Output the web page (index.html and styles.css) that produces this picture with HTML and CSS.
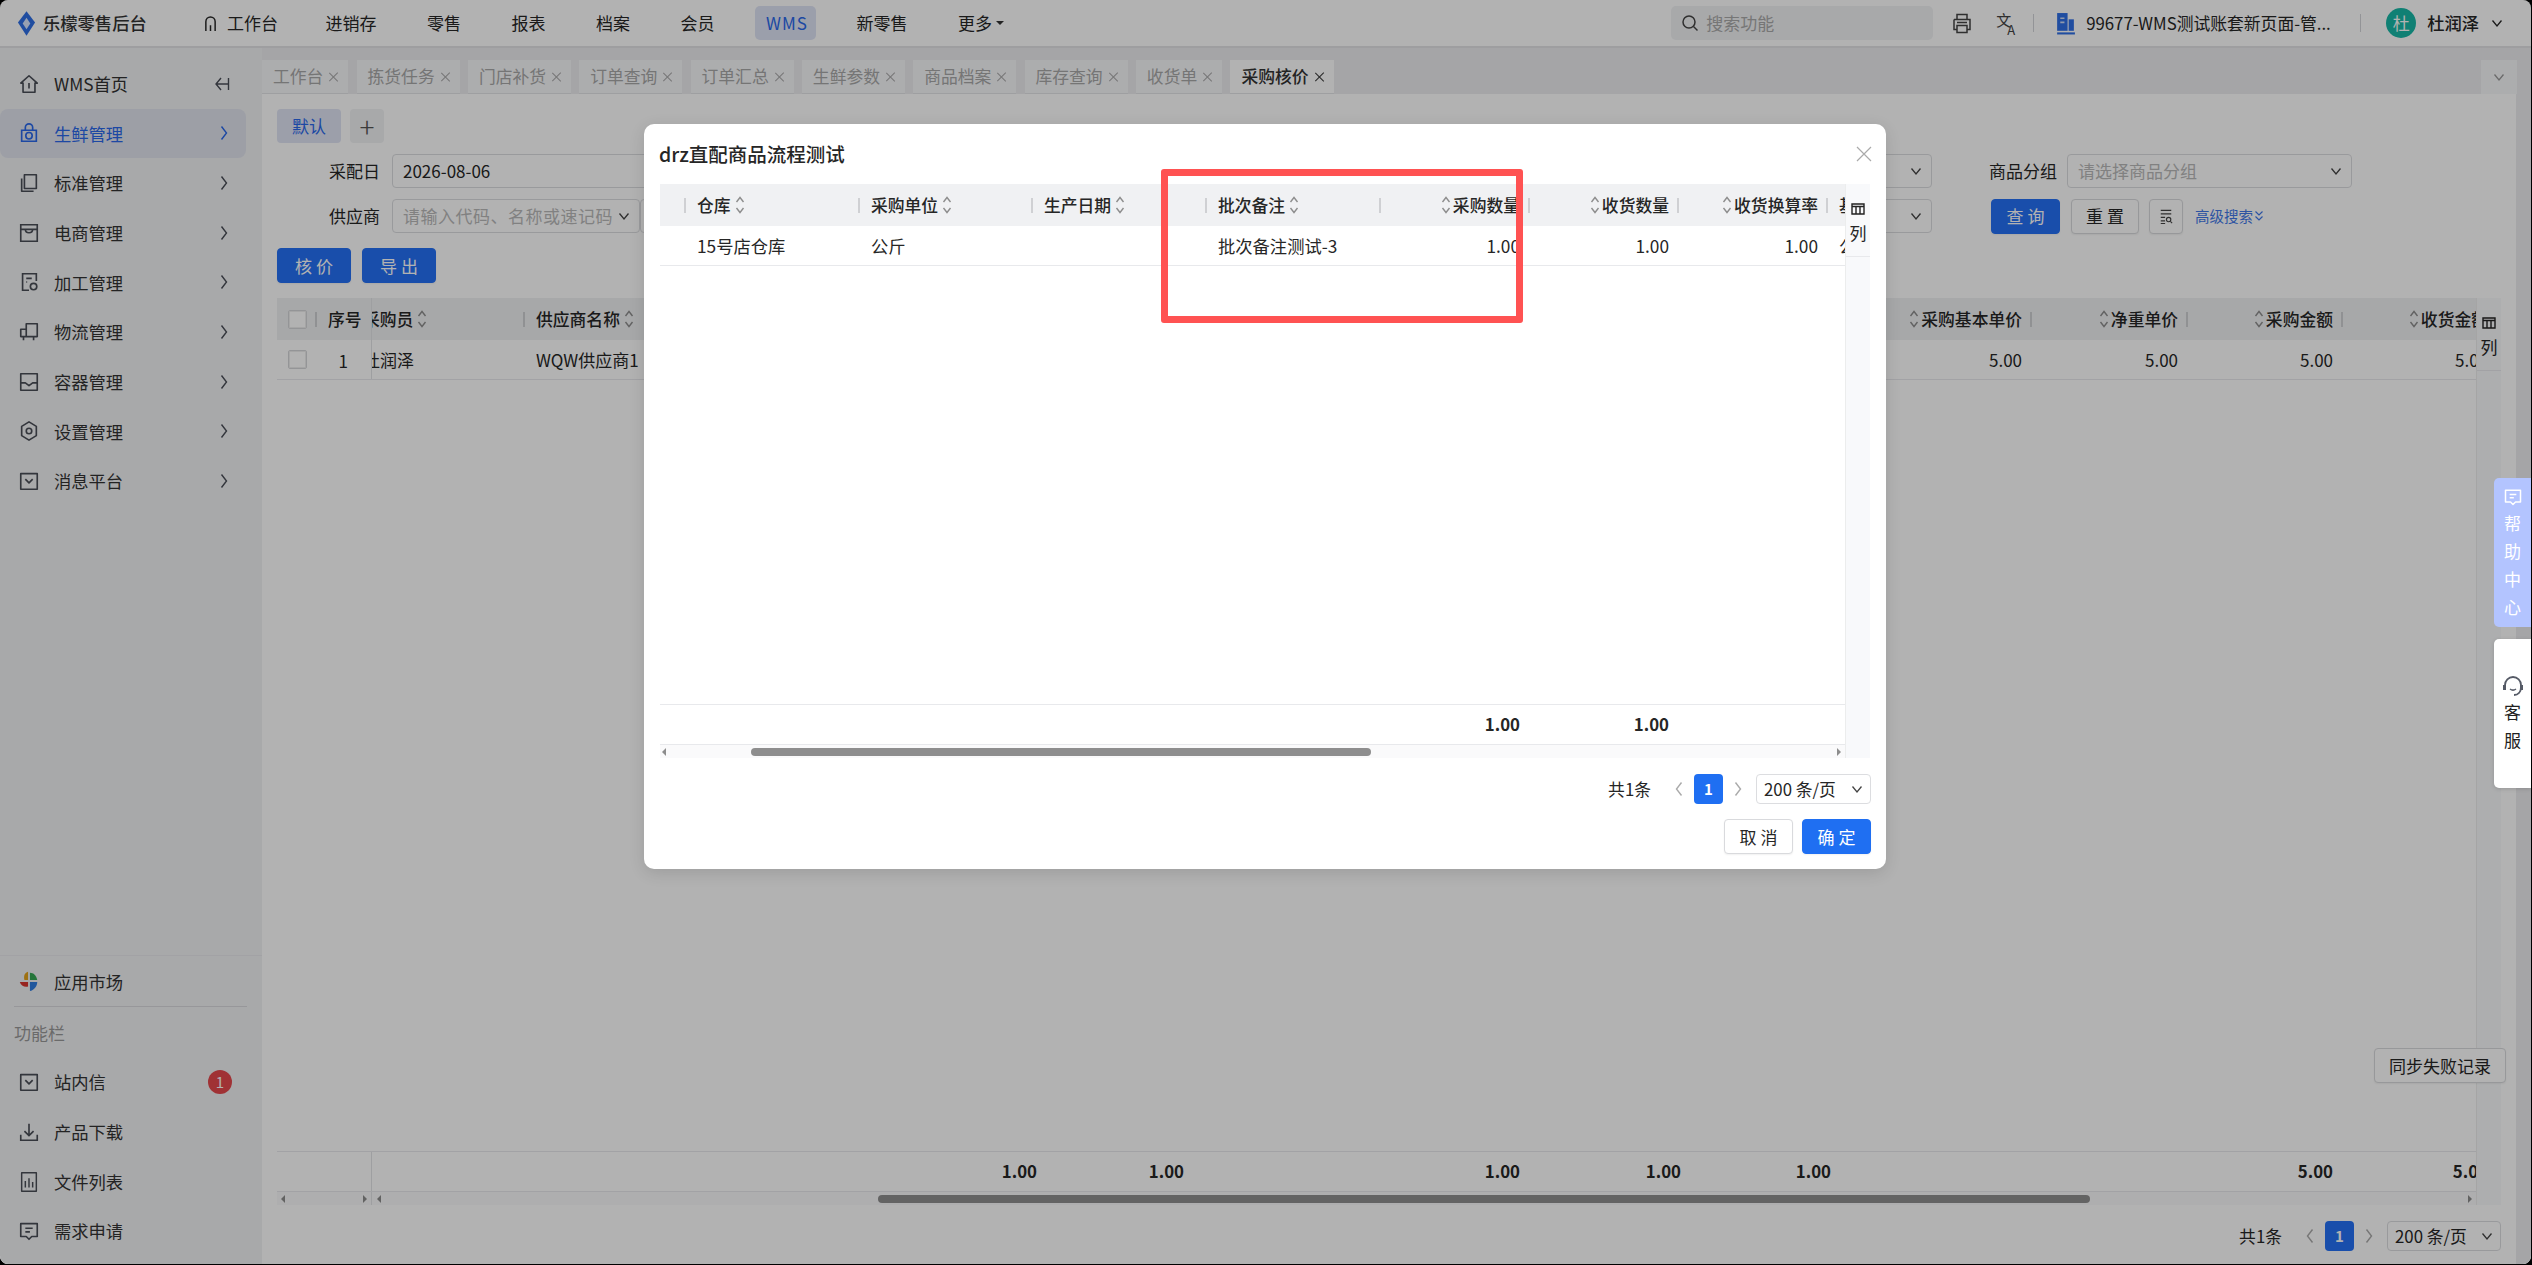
FILE: index.html
```html
<!DOCTYPE html>
<html lang="zh-CN">
<head>
<meta charset="utf-8">
<title>采购核价</title>
<link rel="stylesheet" href="styles.css">
</head>
<body>
<svg class="sprite" aria-hidden="true">
  <symbol id="sort" viewBox="0 0 10 20"><path d="M1.5 7 5 2.500l3.500 4.500M1.5 13 5 17.500l3.500-4.500" fill="none" stroke="currentColor" stroke-width="1.400"/></symbol>
  <symbol id="down" viewBox="0 0 12 12"><path d="M1.5 3.5 6 9l4.500-5.500" fill="none" stroke="currentColor" stroke-width="1.300"/></symbol>
  <symbol id="right" viewBox="0 0 10 20"><path d="M2.500 3.500 7.500 10l-5 6.500" fill="none" stroke="currentColor" stroke-width="1.400"/></symbol>
  <symbol id="left" viewBox="0 0 10 20"><path d="M7.500 3.500 2.500 10l5 6.500" fill="none" stroke="currentColor" stroke-width="1.400"/></symbol>
  <symbol id="dbl" viewBox="0 0 10 12"><path d="M1.500 1.500 5 5l3.500-3.500M1.500 6.500 5 10l3.500-3.500" fill="none" stroke="currentColor" stroke-width="1.200"/></symbol>
  <symbol id="cols" viewBox="0 0 14 14"><path d="M1 2h12v10H1zM1 4.500h12M5 4.500V12M9 4.500V12" fill="none" stroke="currentColor" stroke-width="1.400"/></symbol>
  <symbol id="chat" viewBox="0 0 24 24"><path d="M3 4h18v14h-6l-3 3-3-3H3zM8 9h8M8 13h5" fill="none" stroke="currentColor" stroke-width="1.800" stroke-linejoin="round"/></symbol>
  <symbol id="tray" viewBox="0 0 24 24"><path d="M3 4h18v17H3zM8 10l4 4 4-4" fill="none" stroke="currentColor" stroke-width="1.800" stroke-linejoin="round"/></symbol>
</svg>
<div class="app">
  <header class="topbar">
    <div class="brand">
      <svg class="brand-mark" viewBox="0 0 20 26"><path d="M10 0 19 12 10 26 1 12z" fill="#2f6fe6"/><path d="M10 7 14 13 10 19 6 13z" fill="#d8e6ff"/></svg>
      <span class="brand-name">乐檬零售后台</span>
    </div>
    <nav class="topnav">
      <a class="nav-item nav-first"><svg class="nav-home" viewBox="0 0 14 18"><path d="M2 17V7a5 5 0 0 1 10 0v10M7 11v6" fill="none" stroke="currentColor" stroke-width="1.600"/></svg>工作台</a>
      <a class="nav-item">进销存</a>
      <a class="nav-item">零售</a>
      <a class="nav-item">报表</a>
      <a class="nav-item">档案</a>
      <a class="nav-item">会员</a>
      <a class="nav-item nav-on">WMS</a>
      <a class="nav-item">新零售</a>
      <a class="nav-item">更多<span class="caret"></span></a>
    </nav>
    <div class="top-right">
      <div class="search">
        <svg class="search-ico" viewBox="0 0 18 18"><circle cx="8" cy="8" r="6" fill="none" stroke="currentColor" stroke-width="1.500"/><path d="m12.500 12.500 4 4" stroke="currentColor" stroke-width="1.500"/></svg>
        <span>搜索功能</span>
      </div>
      <svg class="print-ico" viewBox="0 0 20 22"><path d="M5 7V2h10v5M2 7h16v10h-3M5 17H2V7M5 13h10v7H5zM5 10h10" fill="none" stroke="currentColor" stroke-width="1.500"/></svg>
      <span class="lang"><span class="lang-cn">文</span><span class="lang-en">A</span></span>
      <span class="vline vline-a"></span>
      <svg class="book-ico" viewBox="0 0 18 22"><path d="M1 1h10v17H1z" fill="#2f6fe6"/><path d="M12 7h5v11h-5z" fill="#2f6fe6"/><path d="M1 20.500h17" stroke="#2f6fe6" stroke-width="2"/><path d="M4 6h4M4 10h4" stroke="#cfdcf5" stroke-width="1.600"/></svg>
      <span class="company">99677-WMS测试账套新页面-管...</span>
      <span class="vline vline-b"></span>
      <span class="avatar">杜</span>
      <span class="user">杜润泽</span>
      <svg class="user-caret"><use href="#down"/></svg>
    </div>
  </header>

  <div class="shell">
    <aside class="side">
      <div class="side-top">
        <a class="side-item"><svg class="ico" viewBox="0 0 24 24"><path d="M3 11 12 3l9 8h-2.500v10h-13V11zM12 11v6" fill="none" stroke="currentColor" stroke-width="1.800" stroke-linejoin="round"/></svg><span class="side-label">WMS首页</span><svg class="collapse" viewBox="0 0 18 18"><path d="M8 3 3 9l5 6M3 9h13M15.500 3v12" fill="none" stroke="currentColor" stroke-width="1.400"/></svg></a>
        <a class="side-item side-on"><svg class="ico" viewBox="0 0 24 24"><path d="M4 9h16v12H4zM8 9V6a4 4 0 0 1 8 0v3" fill="none" stroke="currentColor" stroke-width="1.800"/><circle cx="12" cy="15" r="3.500" fill="none" stroke="currentColor" stroke-width="1.800"/></svg><span class="side-label">生鲜管理</span><svg class="arr"><use href="#right"/></svg></a>
        <a class="side-item"><svg class="ico" viewBox="0 0 24 24"><path d="M7 3h13v15H7zM4 7v14h13" fill="none" stroke="currentColor" stroke-width="1.800" stroke-linejoin="round"/></svg><span class="side-label">标准管理</span><svg class="arr"><use href="#right"/></svg></a>
        <a class="side-item"><svg class="ico" viewBox="0 0 24 24"><path d="M3 3h18v18H3zM3 8h18M8 8c0 5 8 5 8 0" fill="none" stroke="currentColor" stroke-width="1.800"/></svg><span class="side-label">电商管理</span><svg class="arr"><use href="#right"/></svg></a>
        <a class="side-item"><svg class="ico" viewBox="0 0 24 24"><path d="M20 11V3H5v18h7M9 8h6M9 12h1" fill="none" stroke="currentColor" stroke-width="1.800"/><circle cx="17" cy="17" r="3.500" fill="none" stroke="currentColor" stroke-width="1.800"/></svg><span class="side-label">加工管理</span><svg class="arr"><use href="#right"/></svg></a>
        <a class="side-item"><svg class="ico" viewBox="0 0 24 24"><path d="M9 3h12v14H3V9h6zM9 3v14M6 17v4M17 17v4" fill="none" stroke="currentColor" stroke-width="1.800" stroke-linejoin="round"/></svg><span class="side-label">物流管理</span><svg class="arr"><use href="#right"/></svg></a>
        <a class="side-item"><svg class="ico" viewBox="0 0 24 24"><path d="M3 3h18v18H3zM3 13h5l4 3 4-3h5" fill="none" stroke="currentColor" stroke-width="1.800" stroke-linejoin="round"/></svg><span class="side-label">容器管理</span><svg class="arr"><use href="#right"/></svg></a>
        <a class="side-item"><svg class="ico" viewBox="0 0 24 24"><path d="M12 2 20 7v10l-8 5-8-5V7z" fill="none" stroke="currentColor" stroke-width="1.800" stroke-linejoin="round"/><circle cx="12" cy="12" r="3" fill="none" stroke="currentColor" stroke-width="1.800"/></svg><span class="side-label">设置管理</span><svg class="arr"><use href="#right"/></svg></a>
        <a class="side-item"><svg class="ico"><use href="#tray"/></svg><span class="side-label">消息平台</span><svg class="arr"><use href="#right"/></svg></a>
      </div>
      <div class="side-bottom">
        <a class="side-item side-market"><svg class="ico" viewBox="0 0 24 24"><path d="M11 2C7 3 6 7 7 11h4z" fill="#e2a21b"/><path d="M13 3c4 0 7 3 8 8h-8z" fill="#35a853"/><path d="M11 13H2c1 4 5 6 9 5z" fill="#d8362f"/><path d="M13 13h8c0 5-4 9-8 10z" fill="#2f7de1"/></svg><span class="side-label">应用市场</span></a>
        <div class="side-title">功能栏</div>
        <a class="side-item"><svg class="ico"><use href="#tray"/></svg><span class="side-label">站内信</span><span class="badge">1</span></a>
        <a class="side-item"><svg class="ico" viewBox="0 0 24 24"><path d="M12 3v13M7 11l5 5 5-5M3 15v6h18v-6" fill="none" stroke="currentColor" stroke-width="1.800"/></svg><span class="side-label">产品下载</span></a>
        <a class="side-item"><svg class="ico" viewBox="0 0 24 24"><path d="M4 2h16v20H4zM8 11v7M12 8v10M16 12v6" fill="none" stroke="currentColor" stroke-width="1.600" stroke-linejoin="round"/></svg><span class="side-label">文件列表</span></a>
        <a class="side-item"><svg class="ico"><use href="#chat"/></svg><span class="side-label">需求申请</span></a>
      </div>
    </aside>

    <div class="work">
      <div class="tabs">
        <span class="tab">工作台<i class="x"></i></span>
        <span class="tab">拣货任务<i class="x"></i></span>
        <span class="tab">门店补货<i class="x"></i></span>
        <span class="tab">订单查询<i class="x"></i></span>
        <span class="tab">订单汇总<i class="x"></i></span>
        <span class="tab">生鲜参数<i class="x"></i></span>
        <span class="tab">商品档案<i class="x"></i></span>
        <span class="tab">库存查询<i class="x"></i></span>
        <span class="tab">收货单<i class="x"></i></span>
        <span class="tab tab-on">采购核价<i class="x"></i></span>
        <span class="tab-more"><svg class="tab-more-ico"><use href="#down"/></svg></span>
      </div>
      <div class="work-row">
        <main class="page">
          <div class="presets"><span class="preset preset-on">默认</span><span class="preset preset-add">+</span></div>
          <div class="form-row">
            <label class="f-label">采配日</label>
            <div class="field field-wide">2026-08-06<svg class="f-arrow"><use href="#down"/></svg></div>
            <label class="f-label f-label-b">商品分组</label>
            <div class="field field-group"><span class="ph">请选择商品分组</span><svg class="f-arrow"><use href="#down"/></svg></div>
          </div>
          <div class="form-row">
            <label class="f-label">供应商</label>
            <div class="field field-supplier"><span class="ph ph-long">请输入代码、名称或速记码</span><svg class="f-arrow"><use href="#down"/></svg></div>
            <div class="field field-rest"><svg class="f-arrow"><use href="#down"/></svg></div>
            <div class="form-acts">
              <button class="btn btn-query">查 询</button>
              <button class="btn btn-reset">重 置</button>
              <button class="btn btn-icon"><svg class="list-ico" viewBox="0 0 16 18"><path d="M2 2h12M2 6h12M2 10h5M2 14h5M2 17h5" stroke="currentColor" stroke-width="1.300" fill="none"/><circle cx="11" cy="12.500" r="2.500" fill="none" stroke="currentColor" stroke-width="1.300"/><path d="m13 14.500 2 2" stroke="currentColor" stroke-width="1.300"/></svg></button>
              <a class="adv">高级搜索<svg class="adv-mark"><use href="#dbl"/></svg></a>
            </div>
          </div>
          <div class="acts"><button class="btn btn-primary">核 价</button><button class="btn btn-primary">导 出</button></div>

          <section class="dt">
            <div class="dt-main">
              <div class="dt-scroll">
                <div class="dt-grid dt-head">
                  <div class="c c-check"><span class="check"></span></div>
                  <div class="c c-seq">序号</div>
                  <div class="c c-sep"><span class="clip">采购员</span><svg class="sort"><use href="#sort"/></svg></div>
                  <div class="c c-sep">供应商名称<svg class="sort"><use href="#sort"/></svg></div>
                  <div class="c c-sep">商品名称</div>
                  <div class="c c-sep c-r"><svg class="sort"><use href="#sort"/></svg>采购数量</div>
                  <div class="c c-sep c-r"><svg class="sort"><use href="#sort"/></svg>收货数量</div>
                  <div class="c c-sep">单位</div>
                  <div class="c c-sep c-r"><svg class="sort"><use href="#sort"/></svg>收货换算率</div>
                  <div class="c c-sep c-r"><svg class="sort"><use href="#sort"/></svg>基本数量</div>
                  <div class="c c-sep c-r"><svg class="sort"><use href="#sort"/></svg>净重数量</div>
                  <div class="c c-sep c-r"><svg class="sort"><use href="#sort"/></svg>采购基本单价</div>
                  <div class="c c-sep c-r"><svg class="sort"><use href="#sort"/></svg>净重单价</div>
                  <div class="c c-sep c-r"><svg class="sort"><use href="#sort"/></svg>采购金额</div>
                  <div class="c c-r"><svg class="sort"><use href="#sort"/></svg>收货金额</div>
                </div>
                <div class="dt-grid dt-row">
                  <div class="c c-check"><span class="check"></span></div>
                  <div class="c c-seq c-num">1</div>
                  <div class="c"><span class="clip">杜润泽</span></div>
                  <div class="c">WQW供应商1</div>
                  <div class="c"></div>
                  <div class="c c-r">1.00</div>
                  <div class="c c-r">1.00</div>
                  <div class="c">公斤</div>
                  <div class="c c-r">1.00</div>
                  <div class="c c-r">1.00</div>
                  <div class="c c-r">1.00</div>
                  <div class="c c-r">5.00</div>
                  <div class="c c-r">5.00</div>
                  <div class="c c-r">5.00</div>
                  <div class="c c-r">5.00</div>
                </div>
                <div class="dt-body"></div>
                <div class="dt-grid dt-sum">
                  <div class="c"></div><div class="c c-seq"></div><div class="c"></div><div class="c"></div><div class="c"></div>
                  <div class="c c-r">1.00</div><div class="c c-r">1.00</div><div class="c"></div>
                  <div class="c c-r">1.00</div><div class="c c-r">1.00</div><div class="c c-r">1.00</div>
                  <div class="c"></div><div class="c"></div>
                  <div class="c c-r">5.00</div><div class="c c-r">5.00</div>
                </div>
                <div class="hbar">
                  <div class="hbar-fixed"><i class="tri-l"></i><i class="tri-r"></i></div>
                  <div class="hbar-track"><i class="tri-l"></i><span class="thumb thumb-main"></span><i class="tri-r tri-end"></i></div>
                </div>
              </div>
              <div class="colstrip">
                <div class="colstrip-cell"><svg class="cols-ico"><use href="#cols"/></svg><span>列</span></div>
              </div>
            </div>
            <button class="btn sync">同步失败记录</button>
          </section>

          <div class="pager pager-main">
            <span class="p-total">共1条</span>
            <svg class="p-nav"><use href="#left"/></svg><span class="p-cur">1</span><svg class="p-nav"><use href="#right"/></svg>
            <span class="p-size">200 条/页<svg class="p-arrow"><use href="#down"/></svg></span>
          </div>
        </main>
        <div class="page-gutter"></div>
      </div>
    </div>
  </div>

  <div class="mask"></div>

  <div class="modal">
    <div class="m-head"><span class="m-title">drz直配商品流程测试</span><svg class="m-close" viewBox="0 0 16 16"><path d="m1 1 14 14M15 1 1 15" stroke="currentColor" stroke-width="1.200"/></svg></div>
    <div class="mt">
      <div class="mt-scroll">
        <div class="mt-grid mt-head">
          <div class="c c-sep"></div>
          <div class="c c-sep">仓库<svg class="sort"><use href="#sort"/></svg></div>
          <div class="c c-sep">采购单位<svg class="sort"><use href="#sort"/></svg></div>
          <div class="c c-sep">生产日期<svg class="sort"><use href="#sort"/></svg></div>
          <div class="c c-sep">批次备注<svg class="sort"><use href="#sort"/></svg></div>
          <div class="c c-sep c-r"><svg class="sort"><use href="#sort"/></svg>采购数量</div>
          <div class="c c-sep c-r"><svg class="sort"><use href="#sort"/></svg>收货数量</div>
          <div class="c c-sep c-r"><svg class="sort"><use href="#sort"/></svg>收货换算率</div>
          <div class="c">基本单位</div>
        </div>
        <div class="mt-grid mt-row">
          <div class="c"></div>
          <div class="c">15号店仓库</div>
          <div class="c">公斤</div>
          <div class="c"></div>
          <div class="c">批次备注测试-3</div>
          <div class="c c-r">1.00</div>
          <div class="c c-r">1.00</div>
          <div class="c c-r">1.00</div>
          <div class="c">公斤</div>
        </div>
        <div class="mt-body"></div>
        <div class="mt-grid mt-sum">
          <div class="c"></div><div class="c"></div><div class="c"></div><div class="c"></div><div class="c"></div>
          <div class="c c-r">1.00</div><div class="c c-r">1.00</div><div class="c"></div><div class="c"></div>
        </div>
        <div class="hbar hbar-m"><i class="tri-l"></i><span class="thumb thumb-modal"></span><i class="tri-r tri-end"></i></div>
      </div>
      <div class="colstrip colstrip-m">
        <div class="colstrip-cell colstrip-cell-m"><svg class="cols-ico"><use href="#cols"/></svg><span>列</span></div>
      </div>
    </div>
    <div class="pager pager-modal">
      <span class="p-total">共1条</span>
      <svg class="p-nav"><use href="#left"/></svg><span class="p-cur p-cur-m">1</span><svg class="p-nav"><use href="#right"/></svg>
      <span class="p-size p-size-m">200 条/页<svg class="p-arrow"><use href="#down"/></svg></span>
    </div>
    <div class="m-foot"><button class="btn m-cancel">取 消</button><button class="btn m-ok">确 定</button></div>
  </div>

  <div class="annot"></div>

  <div class="float float-help"><svg class="float-ico"><use href="#chat"/></svg><span>帮</span><span>助</span><span>中</span><span>心</span></div>
  <div class="float float-cs"><svg class="float-ico float-ico-cs" viewBox="0 0 24 24"><path d="M4 13v-2a8 8 0 0 1 16 0v2c0 5-3 8-7 8" fill="none" stroke="currentColor" stroke-width="1.800"/><path d="M2 11h3v5H2zM19 11h3v5h-3z" fill="currentColor"/><path d="M9 15c2 1.500 4 1.500 6 0" fill="none" stroke="currentColor" stroke-width="1.500"/></svg><span>客</span><span>服</span></div>
</div>
</body>
</html>
```
FILE: styles.css
```css
* { box-sizing: border-box; }
html, body { margin: 0; height: 100%; background: #000; }
body { font: 17px/1.25 "Noto Sans CJK SC", "Noto Sans", sans-serif; color: #262626; overflow: hidden; }
.sprite { display: none; }
a { color: inherit; text-decoration: none; }
button { font: inherit; color: inherit; cursor: pointer; }
i { font-style: normal; }

.app { position: relative; width: 2531px; height: 1264px; background: #fff; display: flex; flex-direction: column; overflow: hidden; border-radius: 8px; }

/* top bar */
.topbar { flex: none; height: 48px; display: flex; align-items: center; padding-left: 17px; border-bottom: 2px solid #e2e3e6; }
.brand { width: 177px; display: flex; align-items: center; gap: 7px; }
.brand-mark { width: 19px; height: 25px; }
.brand-name { font-size: 17.300px; font-weight: 500; color: #333; white-space: nowrap; }
.topnav { display: flex; align-items: center; gap: 30.500px; }
.nav-item { display: flex; align-items: center; height: 34px; padding: 0 10px; border-radius: 5px; white-space: nowrap; }
.nav-first { padding-right: 7px; }
.nav-home { width: 13px; height: 17px; margin-right: 10px; }
.nav-on { background: #dfe4f5; color: #2a68ea; letter-spacing: 1px; padding: 0 9px 0 11px; width: 61px; }
.caret { width: 0; height: 0; margin-left: 4px; border: 4px solid transparent; border-top-color: #333; border-bottom: 0; }
.top-right { margin-left: auto; display: flex; align-items: center; padding-right: 28px; }
.search { width: 262px; height: 34px; display: flex; align-items: center; gap: 7px; padding-left: 10px; background: #f1f2f4; border-radius: 5px; color: #aaa; }
.search-ico { width: 18px; height: 18px; color: #444; }
.print-ico { width: 20px; height: 23px; margin-left: 19px; color: #444; }
.lang { width: 24px; height: 24px; margin-left: 24px; display: flex; align-items: flex-start; color: #444; }
.lang-cn { font-size: 15px; line-height: 17px; }
.lang-en { font-size: 13px; line-height: 13px; margin: 12px 0 0 -4px; }
.vline { width: 1px; height: 18px; background: #d3d4d8; }
.vline-a { margin-left: 13px; }
.book-ico { width: 19px; height: 23px; margin-left: 22px; }
.company { width: 254px; margin-left: 11px; white-space: nowrap; overflow: hidden; font-size: 16.800px; }
.vline-b { margin-left: 20px; }
.avatar { width: 30px; height: 30px; margin-left: 25px; border-radius: 50%; background: #17b8a6; color: #fff; display: flex; align-items: center; justify-content: center; }
.user { margin-left: 11px; font-size: 17.300px; font-weight: 500; }
.user-caret { width: 12px; height: 12px; margin-left: 12px; }

/* shell */
.shell { flex: 1; min-height: 0; display: flex; }
.side { flex: none; width: 262px; background: #f1f2f4; display: flex; flex-direction: column; justify-content: space-between; padding: 11px 0 8px; }
.side-item { height: 49.650px; width: 246px; display: flex; align-items: center; padding-left: 18px; border-radius: 8px; color: #333; }
.ico { flex: none; width: 22px; height: 22px; color: #4a4e57; }
.side-label { margin-left: 14px; white-space: nowrap; font-size: 17.300px; }
.arr { width: 10px; height: 20px; margin-left: auto; margin-right: 17px; color: #4a4e57; }
.collapse { width: 18px; height: 18px; margin-left: auto; margin-right: 15px; color: #4a4e57; }
.side-on { background: #e1e4ee; color: #2a68ea; }
.side-on .ico, .side-on .arr { color: #2a68ea; }
.side-bottom { border-top: 1px solid #e8e9ec; }
.side-market { height: 50px; }
.side-title { margin-left: 14px; width: 233px; height: 51px; border-top: 1px solid #d8d9dd; color: #999; display: flex; align-items: center; }
.badge { width: 24px; height: 24px; margin-left: auto; margin-right: 14px; border-radius: 50%; background: #e5484d; color: #fff; display: flex; align-items: center; justify-content: center; font-size: 15px; }

/* work */
.work { flex: 1; min-width: 0; display: flex; flex-direction: column; }
.tabs { flex: none; height: 46px; background: #ecedef; display: flex; align-items: flex-end; gap: 8.200px; }
.tab { height: 34px; padding: 0 9px 0 11px; display: flex; align-items: center; background: #f7f8fa; color: #a8a8a8; white-space: nowrap; border-bottom: 1px solid #e3e4e7; font-size: 16.800px; }
.x { position: relative; width: 10px; height: 10px; margin-left: 6px; }
.x::before, .x::after { content: ""; position: absolute; left: 4px; top: -1px; width: 1.300px; height: 12px; background: currentColor; transform: rotate(45deg); }
.x::after { transform: rotate(-45deg); }
.tab-on { background: #fff; color: #333; font-weight: 500; }
.tab-more { margin-left: auto; margin-right: 14px; width: 36px; height: 34px; background: #f7f8fa; display: flex; align-items: center; justify-content: center; color: #999; }
.tab-more-ico { width: 12px; height: 12px; }
.work-row { flex: 1; min-height: 0; display: flex; }
.page-gutter { flex: none; width: 15px; background: #ecedef; }
.page { flex: 1; min-width: 0; padding: 15px 15px 13px; display: flex; flex-direction: column; }

.presets { flex: none; display: flex; gap: 9px; height: 34px; }
.preset { width: 64px; display: flex; align-items: center; justify-content: center; background: #e0e4f4; color: #2a68ea; border-radius: 4px; }
.preset-add { width: 34px; background: #f1f2f4; color: #555; font-size: 28px; font-weight: 300; line-height: 1; }

.form-row { flex: none; height: 34px; margin-top: 11px; display: flex; align-items: center; }
.f-label { width: 103px; text-align: right; white-space: nowrap; }
.f-label-b { width: 69px; margin-left: 56px; }
.field { height: 34px; display: flex; align-items: center; padding: 0 9px 0 10px; border: 1px solid #dcdde0; border-radius: 4px; white-space: nowrap; background: #fff; }
.f-arrow { flex: none; width: 12px; height: 12px; margin-left: auto; color: #444; }
.ph { color: #b9b9b9; overflow: hidden; }
.ph-long { letter-spacing: .5px; }
.field-wide { width: 1540px; margin-left: 12px; }
.field-group { width: 285px; margin-left: 10px; }
.field-supplier { width: 248px; margin-left: 12px; }
.field-rest { width: 1292px; }
.form-acts { display: flex; align-items: center; margin-left: 59px; }
.btn { height: 35px; padding: 0; background: #fff; border: 1px solid #d9dadd; border-radius: 4px; display: flex; align-items: center; justify-content: center; box-shadow: 0 1px 2px rgba(0,0,0,.06); white-space: nowrap; }
.btn-query { width: 69px; background: #2570f5; border-color: #2570f5; color: #fff; }
.btn-reset { width: 68px; margin-left: 11px; }
.btn-icon { width: 34px; margin-left: 10px; }
.list-ico { width: 14px; height: 17px; color: #444; }
.adv { margin-left: 12px; font-size: 14.500px; color: #3f78e8; white-space: nowrap; display: flex; align-items: center; gap: 1px; }
.adv-mark { width: 10px; height: 12px; }

.acts { flex: none; margin-top: 15px; display: flex; gap: 11px; }
.btn-primary { width: 74px; background: #2570f5; border-color: #2570f5; color: #fff; }

/* shared table parts */
.c { min-width: 0; display: flex; align-items: center; padding: 0 10px 0 11px; white-space: nowrap; overflow: hidden; }
.c-r { justify-content: flex-end; }
.c-sep { background: linear-gradient(#cfd0d3, #cfd0d3) right center / 2px 15px no-repeat; }
.sort { flex: none; width: 10px; height: 20px; margin: 0 4px; color: #8d8d8d; }
.c-r .sort { margin: 0 2px 0 0; }

/* main table */
.dt { flex: 1; min-height: 0; margin-top: 15px; position: relative; display: flex; flex-direction: column; }
.dt-main { flex: 1; min-height: 0; display: flex; }
.dt-scroll { width: 2199px; overflow: hidden; display: flex; flex-direction: column; }
.dt-grid { flex: none; display: grid; width: 2221px; grid-template-columns: 40px 55px 153px 175px 170px 177px 147px 186px 150px 161px 150px 191px 156px 155px 155px; }
.dt-head { height: 42px; background: #f0f1f3; font-weight: 500; font-size: 16.800px; }
.dt-row { height: 40px; border-bottom: 1px solid #e8e9ec; }
.dt-body { flex: 1; }
.dt-sum { height: 41px; border-top: 1px solid #e8e9ec; border-bottom: 1px solid #e8e9ec; font-weight: 700; font-size: 16.800px; }
.c-check { padding: 0 0 0 11px; background: none; }
.dt-head .c-check { background: linear-gradient(#cfd0d3, #cfd0d3) right center / 2px 15px no-repeat; }
.check { width: 19px; height: 19px; border: 1px solid #d5d6d9; border-radius: 2px; background: #fff; box-shadow: 0 0 0 1px #eceded inset; }
.c-seq { padding: 0 0 0 11px; border-right: 1px solid #e3e4e7; }
.c-num { justify-content: flex-end; padding-right: 23px; padding-top: 2px; }
.clip { margin-left: -20px; }
.hbar { flex: none; height: 13px; background: #fafafb; display: flex; align-items: center; }
.hbar-fixed { width: 95px; height: 100%; padding: 0 4px; display: flex; align-items: center; justify-content: space-between; border-right: 1px solid #e3e4e7; }
.hbar-track { flex: 1; height: 100%; display: flex; align-items: center; padding-left: 5px; }
.tri-l { flex: none; width: 0; height: 0; border: 4px solid transparent; border-right: 4px solid #8d8d8d; border-left: 0; }
.tri-r { flex: none; width: 0; height: 0; border: 4px solid transparent; border-left: 4px solid #8d8d8d; border-right: 0; }
.tri-end { margin-left: auto; margin-right: 4px; }
.thumb { flex: none; height: 8px; border-radius: 4px; background: #8e8e8e; }
.thumb-main { width: 1212px; margin-left: 497px; }
.colstrip { flex: none; width: 25px; background: #f8f9fb; border-left: 1px solid #eceded; }
.colstrip-cell { height: 73px; border-bottom: 1px solid #e8e9ec; display: flex; flex-direction: column; align-items: center; padding-top: 18px; gap: 6px; background: #f8f9fb; }
.cols-ico { width: 14px; height: 14px; color: #222; }
.sync { position: absolute; right: -5px; bottom: 122px; width: 132px; }

/* pagers */
.pager { flex: none; height: 30px; display: flex; align-items: center; justify-content: flex-end; }
.pager-main { margin-top: 16px; }
.p-total { margin-right: 18px; font-size: 16.800px; }
.p-nav { width: 20px; height: 20px; color: #aaa; }
.p-cur { width: 29px; height: 30px; margin: 0 5px; border-radius: 4px; background: #2570f5; color: #fff; font-size: 15px; font-weight: 700; display: flex; align-items: center; justify-content: center; }
.p-size { width: 114px; height: 30px; margin-left: 8px; padding: 0 7px; border: 1px solid #dcdde0; border-radius: 4px; display: flex; align-items: center; white-space: nowrap; font-size: 16.800px; }
.p-size-m { width: 115px; }
.p-arrow { width: 12px; height: 12px; margin-left: auto; color: #444; }

/* dim layer + overlays */
.mask { position: absolute; inset: 0; background: rgba(0, 0, 0, .3); }
.modal { position: absolute; left: 644px; top: 124px; width: 1242px; height: 745px; background: #fff; border-radius: 10px; box-shadow: 0 4px 16px rgba(0,0,0,.12); padding: 0 15px 0 16px; display: flex; flex-direction: column; }
.m-head { flex: none; height: 60px; display: flex; align-items: center; justify-content: space-between; }
.m-title { font-size: 19.500px; font-weight: 500; color: #262626; margin-left: -1px; }
.m-close { width: 16px; height: 16px; margin-right: -1px; color: #aaa; }
.mt { flex: none; height: 574px; display: flex; }
.mt-scroll { width: 1185px; overflow: hidden; display: flex; flex-direction: column; }
.mt-grid { flex: none; display: grid; width: 1317px; grid-template-columns: 26px 174px 173px 174px 174px 149px 149px 149px 149px; }
.mt-head { height: 42px; background: #f0f1f3; font-weight: 500; font-size: 16.800px; }
.mt-row { height: 40px; border-bottom: 1px solid #e8e9ec; font-size: 17.300px; }
.mt-body { flex: 1; }
.mt-sum { height: 41px; border-top: 1px solid #e8e9ec; border-bottom: 1px solid #e8e9ec; font-weight: 700; font-size: 16.800px; }
.hbar-m { padding-left: 2px; }
.thumb-modal { width: 620px; margin-left: 85px; }
.colstrip-m { width: 25px; }
.colstrip-cell-m { background: #f8f9fb; }
.pager-modal { margin-top: 16px; }
.p-cur-m { background: #1f6ff2; }
.m-foot { flex: none; margin-top: 15px; display: flex; justify-content: flex-end; gap: 9px; }
.m-cancel { width: 69px; }
.m-ok { width: 69px; background: #1f6ff2; border-color: #1f6ff2; color: #fff; }

.annot { position: absolute; left: 1161px; top: 169px; width: 362px; height: 154px; border: 7px solid #ff5252; border-radius: 3px; }

.float { position: absolute; right: 0; width: 37px; display: flex; flex-direction: column; align-items: center; border-radius: 5px 0 0 5px; line-height: 28px; }
.float-help { top: 478px; height: 149px; background: #b3c4ff; color: #fff; padding-top: 9px; }
.float-cs { top: 639px; height: 149px; background: #fff; color: #222; justify-content: center; box-shadow: 0 1px 4px rgba(0,0,0,.15); }
.float-ico { width: 20px; height: 20px; margin-bottom: 2px; }
.float-ico-cs { width: 24px; height: 24px; margin-bottom: 0; color: #555a66; }
```
